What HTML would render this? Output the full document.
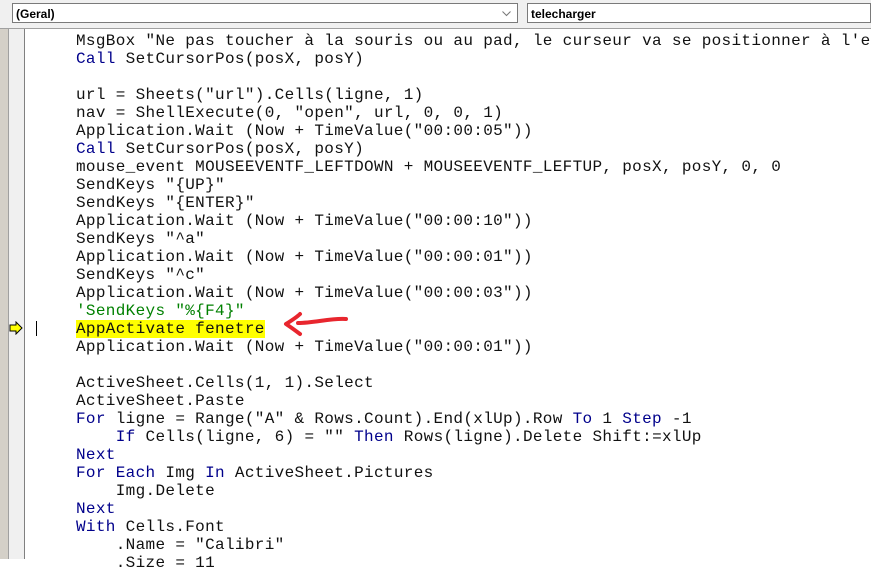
<!DOCTYPE html>
<html><head><meta charset="utf-8"><style>
body{margin:0;width:871px;height:559px;overflow:hidden;background:#fff;position:relative;font-family:"Liberation Sans",sans-serif}
.top{position:absolute;left:0;top:0;width:871px;height:28px;background:#f0f0f0;border-bottom:1px solid #a0a0a0}
.cb{position:absolute;top:3px;height:20px;background:#fff;border:1px solid #7a7a7a;font-size:12px;font-weight:bold;line-height:20px;padding-left:3px;box-sizing:border-box}
.gut{position:absolute;left:0;top:29px;width:8px;height:530px;background:#d4d0c8;border-right:1px solid #a0a0a0}
.gut2{position:absolute;left:9px;top:29px;width:15px;height:530px;background:#f0f0f0;border-right:1px solid #808080}
pre{position:absolute;left:76px;top:32px;margin:0;font-family:"Liberation Mono",monospace;font-size:16px;letter-spacing:0.33px;line-height:18px;color:#111;white-space:pre}
.k{color:#00008b}.c{color:#008000}.h{background:#ffff00}
</style></head><body>
<div class="top">
<div class="cb" style="left:12px;width:506px">(Geral)<svg style="position:absolute;right:6px;top:7px" width="9" height="6"><path d="M0.5 0.5L4.5 4.5L8.5 0.5" stroke="#777" fill="none"/></svg></div>
<div class="cb" style="left:527px;width:344px">telecharger</div>
</div>
<div class="gut"></div><div class="gut2"></div>
<svg style="position:absolute;left:9px;top:321px" width="14" height="14"><path d="M1 4h6V1l6 6-6 6v-3H1z" fill="#ffff00" stroke="#000" stroke-width="1"/></svg>
<div style="position:absolute;left:36px;top:321px;width:1px;height:15px;background:#000"></div>
<svg style="position:absolute;left:280px;top:310px" width="70" height="28"><path d="M66 9C50 8 35 13 18 13M6 14C14 9 18 6 20 4M6 14C12 18 16 21 20 24" stroke="#e8262e" stroke-width="4" fill="none" stroke-linecap="round"/></svg>
<pre>MsgBox "Ne pas toucher à la souris ou au pad, le curseur va se positionner à l'e
<span class="k">Call</span> SetCursorPos(posX, posY)

url = Sheets("url").Cells(ligne, 1)
nav = ShellExecute(0, "open", url, 0, 0, 1)
Application.Wait (Now + TimeValue("00:00:05"))
<span class="k">Call</span> SetCursorPos(posX, posY)
mouse_event MOUSEEVENTF_LEFTDOWN + MOUSEEVENTF_LEFTUP, posX, posY, 0, 0
SendKeys "{UP}"
SendKeys "{ENTER}"
Application.Wait (Now + TimeValue("00:00:10"))
SendKeys "^a"
Application.Wait (Now + TimeValue("00:00:01"))
SendKeys "^c"
Application.Wait (Now + TimeValue("00:00:03"))
<span class="c">'SendKeys "%{F4}"</span>
<span class="h">AppActivate fenetre</span>
Application.Wait (Now + TimeValue("00:00:01"))

ActiveSheet.Cells(1, 1).Select
ActiveSheet.Paste
<span class="k">For</span> ligne = Range("A" &amp; Rows.Count).End(xlUp).Row <span class="k">To</span> 1 <span class="k">Step</span> -1
    <span class="k">If</span> Cells(ligne, 6) = "" <span class="k">Then</span> Rows(ligne).Delete Shift:=xlUp
<span class="k">Next</span>
<span class="k">For Each</span> Img <span class="k">In</span> ActiveSheet.Pictures
    Img.Delete
<span class="k">Next</span>
<span class="k">With</span> Cells.Font
    .Name = "Calibri"
    .Size = 11</pre>
</body></html>
